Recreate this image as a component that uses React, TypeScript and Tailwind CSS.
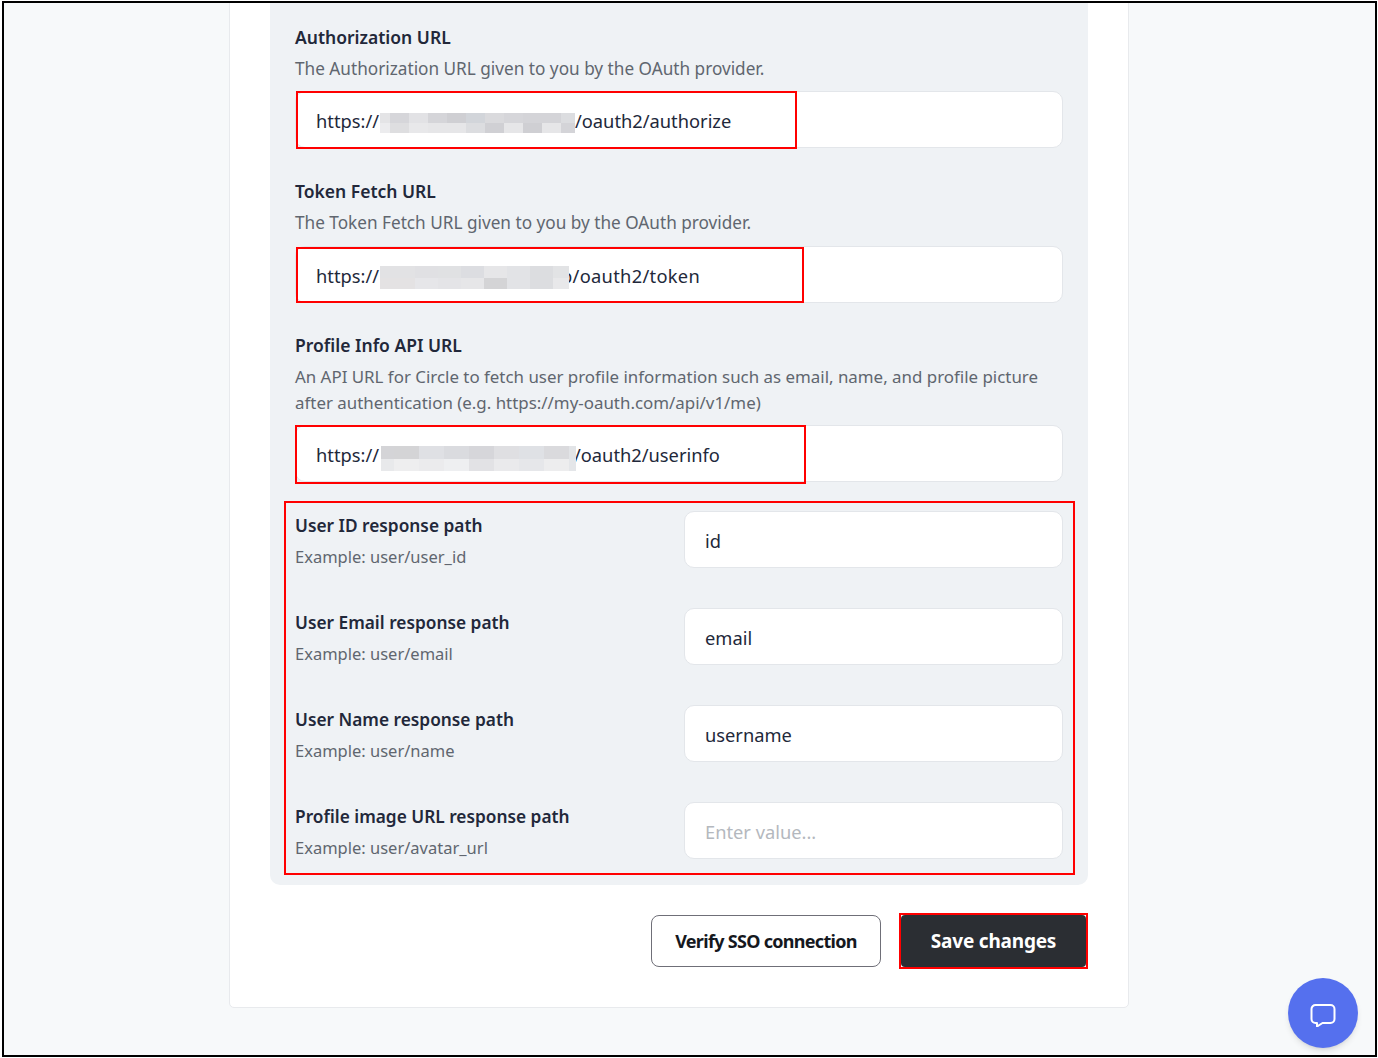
import React from "react";

const fieldClass =
  "h-[57px] flex items-center px-5 pt-[2px] bg-white border border-[#e3e6ea] rounded-[10px] text-[18.3px] text-[#22283a] whitespace-nowrap";

function Mosaic({ rows, className }: { rows: string[][]; className: string }) {
  return (
    <span className={`relative z-10 flex flex-col shrink-0 ${className}`}>
      {rows.map((row, i) => (
        <span key={i} className="flex flex-1">
          {row.map((cell, j) => (
            <span key={j} className={cell} />
          ))}
        </span>
      ))}
    </span>
  );
}

const authRows = [
  ["w-[10px] bg-[#e4e4e6]", "w-[19px] bg-[#d6d6da]", "w-[19px] bg-[#e2e2e5]", "w-[19px] bg-[#d5d5d9]", "w-[19px] bg-[#cfcfd3]", "w-[19px] bg-[#d2d5da]", "w-[19px] bg-[#dadadd]", "w-[19px] bg-[#d6d6da]", "w-[19px] bg-[#d4d4d8]", "w-[19px] bg-[#d4d4d8]", "w-[14px] bg-[#dcdde0]"],
  ["w-[10px] bg-[#ececee]", "w-[19px] bg-[#dedee0]", "w-[19px] bg-[#e8e8ea]", "w-[19px] bg-[#e6e6e8]", "w-[19px] bg-[#e6e6e8]", "w-[19px] bg-[#dcdde0]", "w-[19px] bg-[#d0d0d4]", "w-[19px] bg-[#e6e6e8]", "w-[19px] bg-[#cfcfd3]", "w-[19px] bg-[#e6e6e8]", "w-[14px] bg-[#d4d4d8]"],
];

const tokenRows = [
  ["w-[35px] bg-[#e2e2e4]", "w-[23px] bg-[#e0e0e3]", "w-[23px] bg-[#e0e1e3]", "w-[23px] bg-[#dcdde1]", "w-[23px] bg-[#e6e6e8]", "w-[23px] bg-[#e2e3e6]", "w-[23px] bg-[#dcdde0]", "w-[16px] bg-[#e2e3e5]"],
  ["w-[35px] bg-[#e4e2e3]", "w-[23px] bg-[#e6e6e9]", "w-[23px] bg-[#e4e4e7]", "w-[23px] bg-[#e6e6e8]", "w-[23px] bg-[#d4d4d6]", "w-[23px] bg-[#e2e3e6]", "w-[23px] bg-[#dcdde0]", "w-[16px] bg-[#e8e8ea]"],
];

const profileRows = [
  ["w-[13px] bg-[#d4d4d7]", "w-[25px] bg-[#d4d4d6]", "w-[25px] bg-[#dfe0e4]", "w-[25px] bg-[#dadbdf]", "w-[25px] bg-[#d6d6da]", "w-[25px] bg-[#dfdfe2]", "w-[25px] bg-[#dfe1e5]", "w-[25px] bg-[#dadadd]", "w-[7px] bg-[#e2e4e7]"],
  ["w-[13px] bg-[#e8e9eb]", "w-[25px] bg-[#eeeeef]", "w-[25px] bg-[#ebebed]", "w-[25px] bg-[#eeeff1]", "w-[25px] bg-[#e2e2e5]", "w-[25px] bg-[#eaeaec]", "w-[25px] bg-[#e6e7ea]", "w-[25px] bg-[#ededee]", "w-[7px] bg-[#e4e6e9]"],
];

const pathRows = [
  { label: "User ID response path", example: "Example: user/user_id", value: "id" },
  { label: "User Email response path", example: "Example: user/email", value: "email" },
  { label: "User Name response path", example: "Example: user/name", value: "username" },
  { label: "Profile image URL response path", example: "Example: user/avatar_url", value: "" },
];

function UrlField({
  label,
  children,
  rows,
  mosaicClass,
  tail,
  boxClass,
  className,
  descClass,
  inputGap,
}: {
  label: string;
  children: React.ReactNode;
  rows: string[][];
  mosaicClass: string;
  tail: React.ReactNode;
  boxClass: string;
  className: string;
  descClass: string;
  inputGap: string;
}) {
  return (
    <div className={className}>
      <div className="text-[17.5px] leading-[26px] font-semibold text-[#22283a]">{label}</div>
      <p className={`mt-[6px] leading-[26px] text-[#60666f] ${descClass}`}>{children}</p>
      <div className={`relative ${inputGap} ${fieldClass}`}>
        https://
        <Mosaic rows={rows} className={mosaicClass} />
        {tail}
        <div className={`absolute z-20 border-2 border-[#f00] ${boxClass}`} />
      </div>
    </div>
  );
}

export default function App() {
  return (
    <div className="h-[1058px] bg-white pl-[2px] pr-px py-px">
      <div className="h-full overflow-hidden border-2 border-black bg-[#f7f9fa] font-['Noto_Sans',sans-serif]">
        <div className="relative w-[900px] h-[1007px] -mt-[2px] ml-[225px] bg-white border border-[#e8eaed] rounded-b-[5px] px-10">
          <div className="bg-[#eff2f5] rounded-b-[10px] px-[25px] h-[883px]">
            <UrlField
              label="Authorization URL"
              rows={authRows}
              mosaicClass="w-[195px] h-[20px] ml-px mt-[5px]"
              tail="/oauth2/authorize"
              boxClass="left-0 -top-px w-[501px] h-[58px]"
              className="pt-[22px]"
              descClass="text-[17.2px]"
              inputGap="mt-[9px]"
            >
              The Authorization URL given to you by the OAuth provider.
            </UrlField>
            <UrlField
              label="Token Fetch URL"
              rows={tokenRows}
              mosaicClass="w-[189px] h-[23px] ml-px -mr-[8px] mt-[4px]"
              tail={<span className="tracking-[0.3px]">p/oauth2/token</span>}
              boxClass="left-0 top-0 w-[508px] h-[56px]"
              className="pt-[30px]"
              descClass="text-[17.2px]"
              inputGap="mt-[10px]"
            >
              The Token Fetch URL given to you by the OAuth provider.
            </UrlField>
            <UrlField
              label="Profile Info API URL"
              rows={profileRows}
              mosaicClass="w-[195px] h-[25px] ml-[2px] -mr-[2px] mt-[8px]"
              tail="/oauth2/userinfo"
              boxClass="-left-px -top-px w-[511px] h-[59px]"
              className="pt-[29px]"
              descClass="text-[16.9px]"
              inputGap="mt-[9px]"
            >
              An API URL for Circle to fetch user profile information such as email, name, and profile picture after
              authentication (e.g. https://my-oauth.com/api/v1/me)
            </UrlField>

            <div className="relative mt-[29px] flex flex-col gap-10">
              <div className="absolute -left-[11px] -right-[12px] -top-[10px] -bottom-[16px] border-2 border-[#f00]" />
              {pathRows.map((row) => (
                <div key={row.label} className="h-[57px] grid grid-cols-[389px_379px]">
                  <div>
                    <div className="text-[17.3px] leading-[26px] font-semibold text-[#22283a] mt-[2px]">{row.label}</div>
                    <div className="mt-[5px] text-[16.5px] leading-[26px] text-[#60666f]">{row.example}</div>
                  </div>
                  <div className={fieldClass}>
                    {row.value || <span className="text-[#b4b8be]">Enter value...</span>}
                  </div>
                </div>
              ))}
            </div>
          </div>

          <div className="flex justify-end items-center gap-[18px] mt-[28px]">
            <button className="h-[52px] w-[230px] pt-px rounded-[8px] border border-[#6f6f78] bg-white text-[18px] font-bold tracking-[-0.7px] text-[#15181e]">
              Verify SSO connection
            </button>
            <div className="border-2 border-[#f00] bg-white">
              <button className="block h-[52px] w-[185px] pt-px rounded-[4px] bg-[#2b2e33] text-[19px] font-bold tracking-[-0.2px] text-white">
                Save changes
              </button>
            </div>
          </div>
        </div>

        <button className="fixed left-[1288px] top-[978px] w-[70px] h-[70px] rounded-full bg-[#5570ee] shadow-md flex items-center justify-center">
          <svg width="28" height="28" viewBox="0 0 28 28" fill="none" stroke="white" strokeWidth="2" strokeLinejoin="round">
            <path d="M6.5 6h15a4 4 0 0 1 4 4v10a4 4 0 0 1-4 4h-8l-5.5 3.5V24h-1.5a4 4 0 0 1-4-4V10a4 4 0 0 1 4-4z" />
          </svg>
        </button>
      </div>
    </div>
  );
}
